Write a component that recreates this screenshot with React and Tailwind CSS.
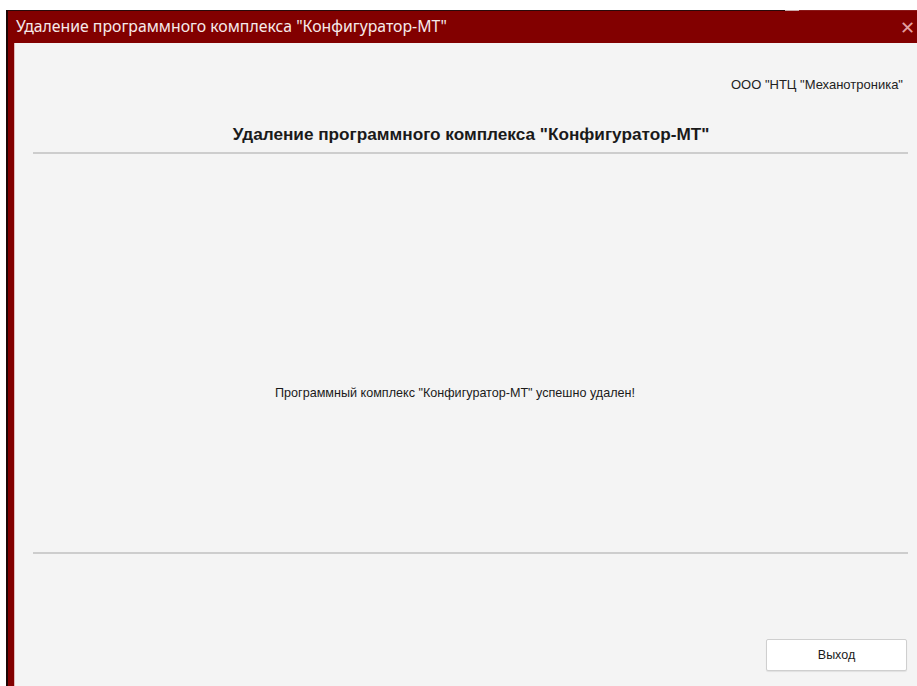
export default function App() {
  return (
    <div className="w-[917px] h-[686px] bg-white flex flex-col overflow-hidden" style={{ fontFamily: '"Noto Sans", "DejaVu Sans", sans-serif' }}>
      {/* desktop strip above the window */}
      <div className="h-[10px] bg-white shrink-0" />
      <div className="flex-1 flex flex-col ml-[6px] border-l-2 border-[#1c0606] min-h-0">
        {/* window top edge */}
        <div className="h-[1px] flex shrink-0">
          <div className="w-[777px] bg-[#2a0a0a]" />
          <div className="w-[14px] bg-[#c9a9a9]" />
          <div className="flex-1 bg-[#8a1a1a]" />
        </div>
        {/* title bar */}
        <div className="h-[32px] bg-[#820000] flex items-center justify-between pl-[8px] pr-[2px] shrink-0">
          <span className="text-[15.8px] text-[#f6eaea] leading-none">Удаление программного комплекса "Конфигуратор-МТ"</span>
          <span className="text-[#e3a0a0] text-[18px] leading-none">✕</span>
        </div>
        <div className="flex-1 flex min-h-0">
          {/* red window frame on the left */}
          <div className="w-[6px] bg-[#820000] shrink-0" />
          <div className="w-[1px] bg-[#e0b8b8] shrink-0" />
          <div className="flex-1 bg-[#f4f4f4] flex flex-col min-h-0" style={{ fontFamily: '"Liberation Sans", Arial, sans-serif' }}>
            <div className="flex justify-end pr-[14px] pt-[35px]">
              <span className="text-[13px] text-[#222] leading-none">ООО "НТЦ "Механотроника"</span>
            </div>
            <div className="flex justify-center mt-[35px] pl-[10px]">
              <span className="text-[17.2px] font-bold text-[#1a1a1a] leading-none">Удаление программного комплекса "Конфигуратор-МТ"</span>
            </div>
            <div className="ml-[18px] mt-[9px] mr-[9px] h-[2px] bg-[#cdcdcd]" />
            <div className="flex-1 flex items-center justify-center pr-[22px] pt-[80px]">
              <span className="text-[12.6px] text-[#1a1a1a] leading-none">Программный комплекс "Конфигуратор-МТ" успешно удален!</span>
            </div>
            <div className="ml-[18px] mr-[9px] h-[2px] bg-[#cdcdcd]" />
            <div className="h-[132px] flex items-end justify-end pr-[10px] pb-[15px] shrink-0">
              <button className="w-[141px] h-[32px] bg-white border border-[#cfcfcf] rounded-[2px] text-[12.5px] text-[#1a1a1a] shadow-[0_1px_1px_rgba(0,0,0,0.08)]">
                Выход
              </button>
            </div>
          </div>
        </div>
      </div>
    </div>
  );
}
